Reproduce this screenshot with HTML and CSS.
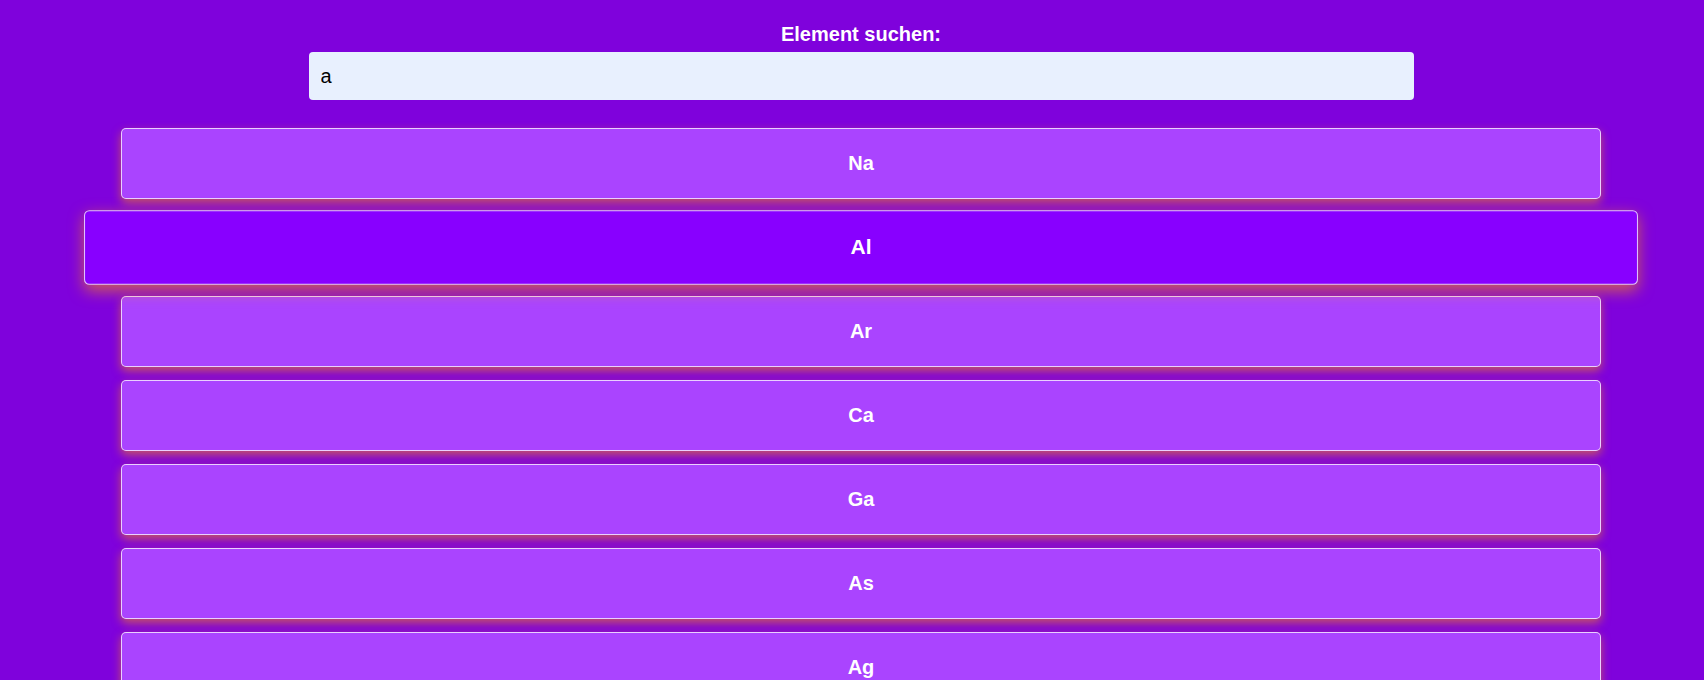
FILE: index.html
```html
<!DOCTYPE html>
<html lang="de">
<head>
<meta charset="utf-8">
<title>Element suchen</title>
<link rel="stylesheet" href="styles.css">
</head>
<body>
<div class="page">
  <div class="search">
    <label class="search-label" for="q">Element suchen:</label>
    <input class="search-input" id="q" type="text" value="a">
  </div>
  <div class="list">
    <div class="card">Na</div>
    <div class="card card-active">Al</div>
    <div class="card">Ar</div>
    <div class="card">Ca</div>
    <div class="card">Ga</div>
    <div class="card">As</div>
    <div class="card">Ag</div>
  </div>
</div>
</body>
</html>
```
FILE: styles.css
```css
html, body {
  margin: 0;
  padding: 0;
  background: #7f02dc;
  overflow: hidden;
}
body {
  font-family: "Liberation Sans", Arial, sans-serif;
  color: #ffffff;
}
.page {
  padding: 23px 0 0 18px;
}
.search {
  width: 1105px;
  margin: 0 auto;
  display: flex;
  flex-direction: column;
  align-items: center;
}
.search-label {
  font-size: 20px;
  font-weight: bold;
  line-height: 23px;
  margin-bottom: 6px;
}
.search-input {
  box-sizing: border-box;
  width: 100%;
  height: 48px;
  border: none;
  border-radius: 4px;
  background: #e8f0fe;
  padding: 0 12px;
  font-family: "Liberation Sans", Arial, sans-serif;
  font-size: 20px;
  color: #000000;
  outline: none;
}
.list {
  margin: 28px auto 0;
  width: 1480px;
  display: flex;
  flex-direction: column;
  gap: 13px;
}
.card {
  box-sizing: border-box;
  height: 71px;
  padding: 23px 0;
  text-align: center;
  font-size: 20px;
  font-weight: bold;
  line-height: 23px;
  background: #aa44ff;
  border: 1px solid rgba(255, 255, 255, 0.75);
  border-radius: 5px;
  box-shadow: 0 4px 10px rgba(255, 150, 0, 0.55);
}
.card-active {
  background: #8800ff;
  transform: scale(1.05);
  box-shadow: 0 5px 14px rgba(255, 150, 0, 0.6);
  position: relative;
  z-index: 1;
}
```
